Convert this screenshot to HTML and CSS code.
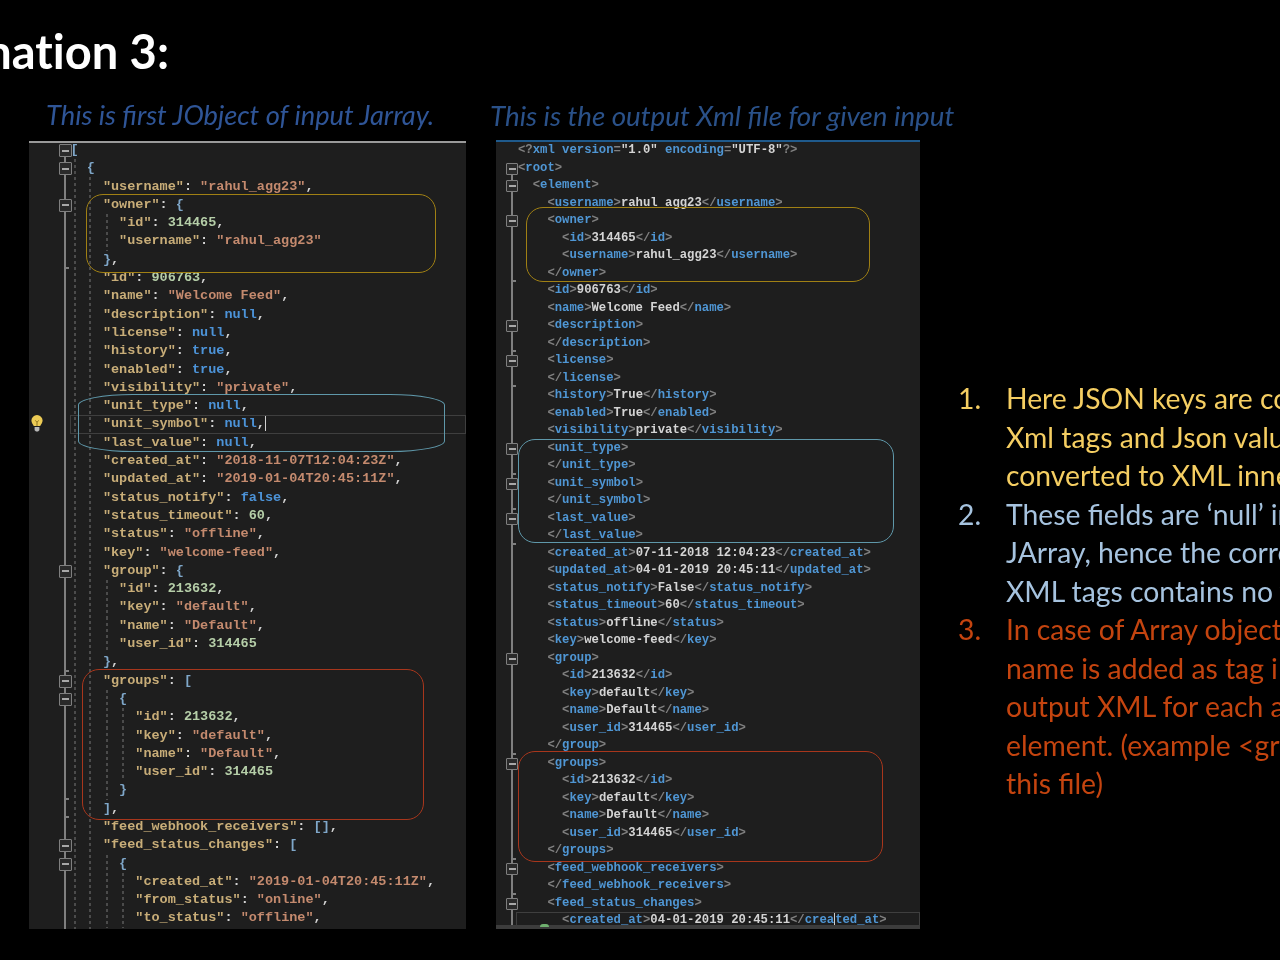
FILE: index.html
```html
<!DOCTYPE html>
<html lang="en">
<head>
<meta charset="utf-8">
<title>Explanation 3</title>
<link rel="stylesheet" href="styles.css">
</head>
<body>
<main class="slide">
  <h1 class="title">Explanation 3:</h1>
  <div class="cols">
    <section class="col col-json">
      <p class="caption cap-json">This is first JObject of input Jarray.</p>
      <div class="panel panel-json">
        <svg class="bulb" viewBox="0 0 14 18" aria-hidden="true"><path d="M7 1a5.6 5.6 0 0 0-5.6 5.6c0 2.4 1.6 3.6 2.4 5.4h6.4c.8-1.8 2.4-3 2.4-5.4A5.6 5.6 0 0 0 7 1z" fill="#eccb55"/><path d="M4.6 13h4.8v3.2L8 17.4H6l-1.4-1.2z" fill="#b9b9b9"/><path d="M5.4 6.4 7 8.4l1.6-2M7 8.4V12" stroke="#8d7420" stroke-width="1" fill="none"/></svg>
        <div class="code json">
          <div class="ln i0 f"><span class="br">[</span></div>
          <div class="ln i1 f top2"><span class="br">{</span></div>
          <div class="ln i2"><span class="k">"username"</span>: <span class="s">"rahul_agg23"</span>,</div>
          <div class="ln i2 f"><span class="k">"owner"</span>: <span class="br">{</span></div>
          <div class="ln i3"><span class="k">"id"</span>: <span class="n">314465</span>,</div>
          <div class="ln i3"><span class="k">"username"</span>: <span class="s">"rahul_agg23"</span></div>
          <div class="ln i2 t"><span class="br">}</span>,</div>
          <div class="ln i2"><span class="k">"id"</span>: <span class="n">906763</span>,</div>
          <div class="ln i2"><span class="k">"name"</span>: <span class="s">"Welcome Feed"</span>,</div>
          <div class="ln i2"><span class="k">"description"</span>: <span class="b">null</span>,</div>
          <div class="ln i2"><span class="k">"license"</span>: <span class="b">null</span>,</div>
          <div class="ln i2"><span class="k">"history"</span>: <span class="b">true</span>,</div>
          <div class="ln i2"><span class="k">"enabled"</span>: <span class="b">true</span>,</div>
          <div class="ln i2"><span class="k">"visibility"</span>: <span class="s">"private"</span>,</div>
          <div class="ln i2"><span class="k">"unit_type"</span>: <span class="b">null</span>,</div>
          <div class="ln i2 cur-json"><span class="k">"unit_symbol"</span>: <span class="b">null</span>,<span class="caret"></span></div>
          <div class="ln i2"><span class="k">"last_value"</span>: <span class="b">null</span>,</div>
          <div class="ln i2"><span class="k">"created_at"</span>: <span class="s">"2018-11-07T12:04:23Z"</span>,</div>
          <div class="ln i2"><span class="k">"updated_at"</span>: <span class="s">"2019-01-04T20:45:11Z"</span>,</div>
          <div class="ln i2"><span class="k">"status_notify"</span>: <span class="b">false</span>,</div>
          <div class="ln i2"><span class="k">"status_timeout"</span>: <span class="n">60</span>,</div>
          <div class="ln i2"><span class="k">"status"</span>: <span class="s">"offline"</span>,</div>
          <div class="ln i2"><span class="k">"key"</span>: <span class="s">"welcome-feed"</span>,</div>
          <div class="ln i2 f"><span class="k">"group"</span>: <span class="br">{</span></div>
          <div class="ln i3"><span class="k">"id"</span>: <span class="n">213632</span>,</div>
          <div class="ln i3"><span class="k">"key"</span>: <span class="s">"default"</span>,</div>
          <div class="ln i3"><span class="k">"name"</span>: <span class="s">"Default"</span>,</div>
          <div class="ln i3"><span class="k">"user_id"</span>: <span class="n">314465</span></div>
          <div class="ln i2 t"><span class="br">}</span>,</div>
          <div class="ln i2 f"><span class="k">"groups"</span>: <span class="br">[</span></div>
          <div class="ln i3 f"><span class="br">{</span></div>
          <div class="ln i4"><span class="k">"id"</span>: <span class="n">213632</span>,</div>
          <div class="ln i4"><span class="k">"key"</span>: <span class="s">"default"</span>,</div>
          <div class="ln i4"><span class="k">"name"</span>: <span class="s">"Default"</span>,</div>
          <div class="ln i4"><span class="k">"user_id"</span>: <span class="n">314465</span></div>
          <div class="ln i3 t"><span class="br">}</span></div>
          <div class="ln i2 t"><span class="br">]</span>,</div>
          <div class="ln i2"><span class="k">"feed_webhook_receivers"</span>: <span class="br">[]</span>,</div>
          <div class="ln i2 f"><span class="k">"feed_status_changes"</span>: <span class="br">[</span></div>
          <div class="ln i3 f"><span class="br">{</span></div>
          <div class="ln i4"><span class="k">"created_at"</span>: <span class="s">"2019-01-04T20:45:11Z"</span>,</div>
          <div class="ln i4"><span class="k">"from_status"</span>: <span class="s">"online"</span>,</div>
          <div class="ln i4"><span class="k">"to_status"</span>: <span class="s">"offline"</span>,</div>
        </div>
        <div class="ring ring-y j-y"></div>
        <div class="ring ring-b j-b"></div>
        <div class="ring ring-r j-r"></div>
      </div>
    </section>

    <section class="col col-xml">
      <p class="caption cap-xml">This is the output Xml file for given input</p>
      <div class="panel panel-xml">
        <div class="code xml">
          <div class="ln x0"><i>&lt;?</i><b>xml version</b><i>=</i><u>"1.0"</u> <b>encoding</b><i>=</i><u>"UTF-8"</u><i>?&gt;</i></div>
          <div class="ln x0 f"><i>&lt;</i><b>root</b><i>&gt;</i></div>
          <div class="ln x1 f"><i>&lt;</i><b>element</b><i>&gt;</i></div>
          <div class="ln x2"><i>&lt;</i><b>username</b><i>&gt;</i>rahul_agg23<i>&lt;/</i><b>username</b><i>&gt;</i></div>
          <div class="ln x2 f"><i>&lt;</i><b>owner</b><i>&gt;</i></div>
          <div class="ln x3"><i>&lt;</i><b>id</b><i>&gt;</i>314465<i>&lt;/</i><b>id</b><i>&gt;</i></div>
          <div class="ln x3"><i>&lt;</i><b>username</b><i>&gt;</i>rahul_agg23<i>&lt;/</i><b>username</b><i>&gt;</i></div>
          <div class="ln x2 t"><i>&lt;/</i><b>owner</b><i>&gt;</i></div>
          <div class="ln x2"><i>&lt;</i><b>id</b><i>&gt;</i>906763<i>&lt;/</i><b>id</b><i>&gt;</i></div>
          <div class="ln x2"><i>&lt;</i><b>name</b><i>&gt;</i>Welcome Feed<i>&lt;/</i><b>name</b><i>&gt;</i></div>
          <div class="ln x2 f"><i>&lt;</i><b>description</b><i>&gt;</i></div>
          <div class="ln x2 t"><i>&lt;/</i><b>description</b><i>&gt;</i></div>
          <div class="ln x2 f"><i>&lt;</i><b>license</b><i>&gt;</i></div>
          <div class="ln x2 t"><i>&lt;/</i><b>license</b><i>&gt;</i></div>
          <div class="ln x2"><i>&lt;</i><b>history</b><i>&gt;</i>True<i>&lt;/</i><b>history</b><i>&gt;</i></div>
          <div class="ln x2"><i>&lt;</i><b>enabled</b><i>&gt;</i>True<i>&lt;/</i><b>enabled</b><i>&gt;</i></div>
          <div class="ln x2"><i>&lt;</i><b>visibility</b><i>&gt;</i>private<i>&lt;/</i><b>visibility</b><i>&gt;</i></div>
          <div class="ln x2 f"><i>&lt;</i><b>unit_type</b><i>&gt;</i></div>
          <div class="ln x2 t"><i>&lt;/</i><b>unit_type</b><i>&gt;</i></div>
          <div class="ln x2 f"><i>&lt;</i><b>unit_symbol</b><i>&gt;</i></div>
          <div class="ln x2 t"><i>&lt;/</i><b>unit_symbol</b><i>&gt;</i></div>
          <div class="ln x2 f"><i>&lt;</i><b>last_value</b><i>&gt;</i></div>
          <div class="ln x2 t"><i>&lt;/</i><b>last_value</b><i>&gt;</i></div>
          <div class="ln x2"><i>&lt;</i><b>created_at</b><i>&gt;</i>07-11-2018 12:04:23<i>&lt;/</i><b>created_at</b><i>&gt;</i></div>
          <div class="ln x2"><i>&lt;</i><b>updated_at</b><i>&gt;</i>04-01-2019 20:45:11<i>&lt;/</i><b>updated_at</b><i>&gt;</i></div>
          <div class="ln x2"><i>&lt;</i><b>status_notify</b><i>&gt;</i>False<i>&lt;/</i><b>status_notify</b><i>&gt;</i></div>
          <div class="ln x2"><i>&lt;</i><b>status_timeout</b><i>&gt;</i>60<i>&lt;/</i><b>status_timeout</b><i>&gt;</i></div>
          <div class="ln x2"><i>&lt;</i><b>status</b><i>&gt;</i>offline<i>&lt;/</i><b>status</b><i>&gt;</i></div>
          <div class="ln x2"><i>&lt;</i><b>key</b><i>&gt;</i>welcome-feed<i>&lt;/</i><b>key</b><i>&gt;</i></div>
          <div class="ln x2 f"><i>&lt;</i><b>group</b><i>&gt;</i></div>
          <div class="ln x3"><i>&lt;</i><b>id</b><i>&gt;</i>213632<i>&lt;/</i><b>id</b><i>&gt;</i></div>
          <div class="ln x3"><i>&lt;</i><b>key</b><i>&gt;</i>default<i>&lt;/</i><b>key</b><i>&gt;</i></div>
          <div class="ln x3"><i>&lt;</i><b>name</b><i>&gt;</i>Default<i>&lt;/</i><b>name</b><i>&gt;</i></div>
          <div class="ln x3"><i>&lt;</i><b>user_id</b><i>&gt;</i>314465<i>&lt;/</i><b>user_id</b><i>&gt;</i></div>
          <div class="ln x2 t"><i>&lt;/</i><b>group</b><i>&gt;</i></div>
          <div class="ln x2 f"><i>&lt;</i><b>groups</b><i>&gt;</i></div>
          <div class="ln x3"><i>&lt;</i><b>id</b><i>&gt;</i>213632<i>&lt;/</i><b>id</b><i>&gt;</i></div>
          <div class="ln x3"><i>&lt;</i><b>key</b><i>&gt;</i>default<i>&lt;/</i><b>key</b><i>&gt;</i></div>
          <div class="ln x3"><i>&lt;</i><b>name</b><i>&gt;</i>Default<i>&lt;/</i><b>name</b><i>&gt;</i></div>
          <div class="ln x3"><i>&lt;</i><b>user_id</b><i>&gt;</i>314465<i>&lt;/</i><b>user_id</b><i>&gt;</i></div>
          <div class="ln x2 t"><i>&lt;/</i><b>groups</b><i>&gt;</i></div>
          <div class="ln x2 f"><i>&lt;</i><b>feed_webhook_receivers</b><i>&gt;</i></div>
          <div class="ln x2 t"><i>&lt;/</i><b>feed_webhook_receivers</b><i>&gt;</i></div>
          <div class="ln x2 f"><i>&lt;</i><b>feed_status_changes</b><i>&gt;</i></div>
          <div class="ln x3 cur-xml"><i>&lt;</i><b>created_at</b><i>&gt;</i>04-01-2019 20:45:11<i>&lt;/</i><b>crea<span class="caret"></span>ted_at</b><i>&gt;</i></div>
        </div>
        <div class="bar"><span class="bar-mark"></span></div>
        <div class="ring ring-y x-y"></div>
        <div class="ring ring-b x-b"></div>
        <div class="ring ring-r x-r"></div>
      </div>
    </section>

    <ol class="notes">
      <li class="note note-y">
        <span class="num">1.</span>
        <div class="note-lines"><span>Here JSON keys are converted to</span><span>Xml tags and Json values are</span><span>converted to XML inner text.</span></div>
      </li>
      <li class="note note-b">
        <span class="num">2.</span>
        <div class="note-lines"><span>These fields are ‘null’ in input</span><span>JArray, hence the corresponding</span><span>XML tags contains no value.</span></div>
      </li>
      <li class="note note-r">
        <span class="num">3.</span>
        <div class="note-lines"><span>In case of Array object, array</span><span>name is added as tag in the</span><span>output XML for each array</span><span>element. (example &lt;groups&gt; in</span><span>this file)</span></div>
      </li>
    </ol>
  </div>
</main>
</body>
</html>
```
FILE: styles.css
```css
* { box-sizing: border-box; }
html, body { margin: 0; padding: 0; background: #000; }
body { width: 1280px; height: 960px; overflow: hidden; }

.slide {
  width: 1280px;
  height: 960px;
  overflow: hidden;
  background: #000;
  display: flex;
  flex-direction: column;
  filter: blur(0.55px);
}

.title {
  width: 169px;
  height: 92px;
  margin: 0;
  padding-top: 22px;
  display: flex;
  justify-content: flex-end;
  white-space: nowrap;
  font: 700 47px/58px "Lato", "Liberation Sans", sans-serif;
  font-variant-ligatures: none;
  color: #fff;
}

.cols {
  display: flex;
  padding-left: 29px;
  height: 868px;
}

.col { display: flex; flex-direction: column; flex: none; }
.col-json { width: 437px; }
.col-xml { width: 424px; margin-left: 30px; }

.caption {
  margin: 0;
  height: 49px;
  padding-top: 6px;
  white-space: nowrap;
  font: italic 400 27.3px/34px "Lato", "Liberation Sans", sans-serif;
}
.cap-json { padding-left: 17px; color: #2f5597; }
.cap-xml { margin-left: -6px; height: 48px; padding-top: 7px; font-size: 27.75px; color: #2a5189; }

.panel {
  position: relative;
  flex: none;
  display: flex;
  flex-direction: column;
  overflow: hidden;
  background: #1e1e1e;
}
.panel-json { height: 788px; border-top: 2px solid #9a9a9a; }
.panel-xml { height: 789px; border-top: 2px solid #1f5a8c; }

.code {
  flex: 1;
  min-height: 0;
  overflow: hidden;
  font-family: "Liberation Mono", "DejaVu Sans Mono", monospace;
  color: #d4d4d4;
}

.json {
  margin-top: -2px;
  font-size: 13.5px;
  background:
    linear-gradient(#7f7f7f, #7f7f7f) 35px 8px / 2px 100% no-repeat,
    repeating-linear-gradient(#4b4b4b 0 3px, transparent 3px 6px) 45px 18px / 2px 100% no-repeat,
    repeating-linear-gradient(#4b4b4b 0 3px, transparent 3px 6px) 60px 36px / 2px 100% no-repeat;
}
.json .ln { height: 18.3px; line-height: 18.3px; }

.xml {
  font-size: 12.25px;
  background: linear-gradient(#7f7f7f, #7f7f7f) 14.5px 26px / 2px 100% no-repeat;
}
.xml .ln { height: 17.5px; line-height: 17.5px; }

.ln { position: relative; white-space: pre; font-weight: 700; }

.i0 { padding-left: 41.5px; }
.i1 { padding-left: 57.7px; }
.i2 { padding-left: 73.9px; }
.i3 {
  padding-left: 90.1px;
  background: repeating-linear-gradient(#4b4b4b 0 3px, transparent 3px 6px) 77px 0 / 2px 100% no-repeat;
}
.i4 {
  padding-left: 106.3px;
  background:
    repeating-linear-gradient(#4b4b4b 0 3px, transparent 3px 6px) 77px 0 / 2px 100% no-repeat,
    repeating-linear-gradient(#4b4b4b 0 3px, transparent 3px 6px) 93px 0 / 2px 100% no-repeat;
}
.x0 { padding-left: 22px; }
.x1 { padding-left: 36.7px; }
.x2 { padding-left: 51.4px; }
.x3 { padding-left: 66.1px; }

.k { color: #c8ad78; }
.s { color: #c48a6e; }
.n { color: #b5cea8; }
.b { color: #4c93d8; }
.br { color: #7fa7c9; }

.xml i { font-style: normal; color: #808080; }
.xml b { font-weight: 700; color: #4f96d4; }
.xml u { text-decoration: none; color: #d4d4d4; }

.f::before {
  content: "";
  position: absolute;
  top: 3px;
  left: 30px;
  width: 11px;
  height: 11px;
  border: 1.5px solid #7f7f7f;
  border-radius: 1px;
  background: linear-gradient(#a8a8a8, #a8a8a8) center / 7px 2px no-repeat, #2a2a2a;
}
.xml .f::before { left: 10px; top: 3px; width: 10px; height: 10px; }

.t::after {
  content: "";
  position: absolute;
  left: 35px;
  bottom: 0;
  width: 5px;
  height: 2px;
  background: #7f7f7f;
}
.xml .t::after { left: 14.5px; }

.cur-json::after, .cur-xml::after {
  content: "";
  position: absolute;
  top: 0;
  bottom: 0;
  right: 0;
  border: 1px solid #3f3f3f;
}
.cur-json::after { left: 41px; }
.cur-xml::after { left: 20px; }

.caret {
  display: inline-block;
  width: 1px;
  height: 15px;
  vertical-align: middle;
  background: #cfcfcf;
}

.bulb {
  position: absolute;
  left: 1px;
  top: 271px;
  width: 14px;
  height: 18px;
}

.bar {
  flex: none;
  position: relative;
  height: 4px;
  background: #3c3c3c;
}
.bar-mark {
  position: absolute;
  left: 44px;
  top: -1px;
  width: 9px;
  height: 3px;
  border-radius: 5px 5px 0 0;
  background: #6fb06f;
}

.ring {
  position: absolute;
  border: 1.5px solid;
  border-radius: 17px;
  pointer-events: none;
}
.ring-y { border-color: #a08014; }
.ring-b { border-color: #5f98aa; }
.ring-r { border-color: #a8361c; }

.j-y { left: 57px; top: 51px; width: 350px; height: 79px; }
.j-b { left: 49px; top: 251px; width: 367px; height: 58px; border-radius: 55px / 11px; }
.j-r { left: 53px; top: 526px; width: 342px; height: 151px; }

.x-y { left: 30px; top: 65px; width: 344px; height: 75px; }
.x-b { left: 22px; top: 297px; width: 376px; height: 104px; }
.x-r { left: 22px; top: 609px; width: 365px; height: 111px; }

.notes {
  list-style: none;
  margin: 0 0 0 38px;
  padding: 287px 0 0;
  flex: none;
  width: 322px;
  display: flex;
  flex-direction: column;
  font: 400 28.3px/38.5px "Lato", "Liberation Sans", sans-serif;
  white-space: nowrap;
}
.note { display: flex; }
.num { flex: none; width: 48px; }
.note-lines { display: flex; flex-direction: column; }
.note-y { color: #f5ce62; }
.note-b { color: #a6c3df; }
.note-r { color: #c4440f; }
```
